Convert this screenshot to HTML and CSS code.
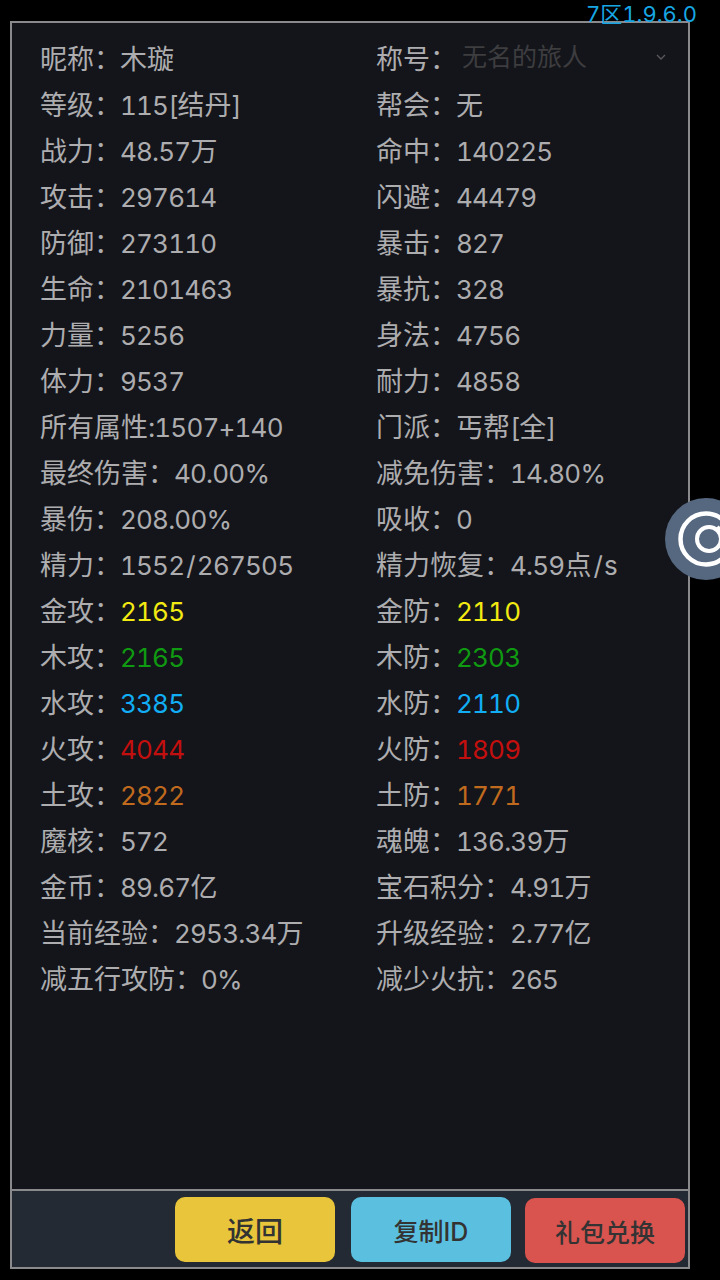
FILE: index.html
```html
<!DOCTYPE html>
<html lang="zh-CN">
<head>
<meta charset="utf-8">
<title>角色属性</title>
<link rel="stylesheet" href="styles.css">
</head>
<body>
<div class="version">7区1.9.6.0</div>
<main class="panel">
  <section class="stats">
    <div class="row">昵称：<span class="v"><span class="c">木璇</span></span></div>
    <div class="row title-row">称号：<span class="select"><span class="select-text">无名的旅人</span><svg class="chev" viewBox="0 0 10 6" width="10" height="6"><path d="M1 1l4 4 4-4" fill="none" stroke="#5a5a5c" stroke-width="1.3"/></svg></span></div>
    <div class="row">等级：<span class="v">115[<span class="c">结丹</span>]</span></div>
    <div class="row">帮会：<span class="v"><span class="c">无</span></span></div>
    <div class="row">战力：<span class="v">48.57<span class="c">万</span></span></div>
    <div class="row">命中：<span class="v">140225</span></div>
    <div class="row">攻击：<span class="v">297614</span></div>
    <div class="row">闪避：<span class="v">44479</span></div>
    <div class="row">防御：<span class="v">273110</span></div>
    <div class="row">暴击：<span class="v">827</span></div>
    <div class="row">生命：<span class="v">2101463</span></div>
    <div class="row">暴抗：<span class="v">328</span></div>
    <div class="row">力量：<span class="v">5256</span></div>
    <div class="row">身法：<span class="v">4756</span></div>
    <div class="row">体力：<span class="v">9537</span></div>
    <div class="row">耐力：<span class="v">4858</span></div>
    <div class="row">所有属性:<span class="v">1507+140</span></div>
    <div class="row">门派：<span class="v"><span class="c">丐帮</span>[<span class="c">全</span>]</span></div>
    <div class="row">最终伤害：<span class="v">40.00%</span></div>
    <div class="row">减免伤害：<span class="v">14.80%</span></div>
    <div class="row">暴伤：<span class="v">208.00%</span></div>
    <div class="row">吸收：<span class="v">0</span></div>
    <div class="row">精力：<span class="v">1552<span class="slash">/</span>267505</span></div>
    <div class="row">精力恢复：<span class="v">4.59<span class="c">点</span><span class="slash">/</span>s</span></div>
    <div class="row">金攻：<span class="v gold">2165</span></div>
    <div class="row">金防：<span class="v gold">2110</span></div>
    <div class="row">木攻：<span class="v wood">2165</span></div>
    <div class="row">木防：<span class="v wood">2303</span></div>
    <div class="row">水攻：<span class="v water">3385</span></div>
    <div class="row">水防：<span class="v water">2110</span></div>
    <div class="row">火攻：<span class="v fire">4044</span></div>
    <div class="row">火防：<span class="v fire">1809</span></div>
    <div class="row">土攻：<span class="v earth">2822</span></div>
    <div class="row">土防：<span class="v earth">1771</span></div>
    <div class="row">魔核：<span class="v">572</span></div>
    <div class="row">魂魄：<span class="v">136.39<span class="c">万</span></span></div>
    <div class="row">金币：<span class="v">89.67<span class="c">亿</span></span></div>
    <div class="row">宝石积分：<span class="v">4.91<span class="c">万</span></span></div>
    <div class="row">当前经验：<span class="v">2953.34<span class="c">万</span></span></div>
    <div class="row">升级经验：<span class="v">2.77<span class="c">亿</span></span></div>
    <div class="row">减五行攻防：<span class="v">0%</span></div>
    <div class="row">减少火抗：<span class="v">265</span></div>
  </section>
  <footer class="footer">
    <button class="btn btn-back">返回</button>
    <button class="btn btn-copy">复制ID</button>
    <button class="btn btn-gift">礼包兑换</button>
  </footer>
</main>
<div class="float-btn">
  <svg viewBox="0 0 55 82" width="55" height="82">
    <circle cx="41" cy="41" r="41" fill="#556880"/>
    <circle cx="41" cy="41" r="25.5" fill="none" stroke="#fff" stroke-width="4.5"/>
    <circle cx="44" cy="41" r="12" fill="none" stroke="#fff" stroke-width="4"/>
    <path d="M52 32l3-3" fill="none" stroke="#fff" stroke-width="4"/>
  </svg>
</div>
</body>
</html>
```
FILE: styles.css
```css
* { box-sizing: border-box; }
html, body { margin: 0; padding: 0; }
body {
  width: 720px;
  height: 1280px;
  background: #000;
  overflow: hidden;
  position: relative;
  font-family: Inter, "Noto Sans CJK SC", sans-serif;
  font-variant-numeric: tabular-nums;
  padding: 21px 30px 11px 10px;
}
.version {
  position: absolute;
  top: 0;
  right: 23px;
  font-size: 22px;
  line-height: 29px;
  color: #17a6e3;
  z-index: 2;
}
.panel {
  height: 1248px;
  border: 2px solid #8a8a8c;
  background: #14151a;
  display: flex;
  flex-direction: column;
}
.stats {
  flex: 1;
  display: grid;
  grid-template-columns: 336px 1fr;
  grid-auto-rows: 46px;
  align-content: start;
  padding: 14px 0 0 28px;
}
.row {
  display: flex;
  align-items: center;
  font-size: 27px;
  line-height: 46px;
  color: #adadb0;
  white-space: nowrap;
}
.v {
  font-size: 26px;
  letter-spacing: -0.8px;
  margin-left: -1px;
}
.c {
  font-size: 27px;
  letter-spacing: 0;
}
.slash { margin: 0 2px; }
.select {
  display: flex;
  align-items: center;
  justify-content: space-between;
  width: 207px;
  margin-left: 5px;
  margin-top: -6px;
}
.select-text { font-size: 25px; color: #3d3d40; }
.chev { margin-right: 3px; }
.gold { color: #f2ea12; }
.wood { color: #0f9a12; }
.water { color: #11aef5; }
.fire { color: #c40f0f; }
.earth { color: #c06a1e; }
.footer {
  height: 78px;
  border-top: 2px solid #8a8a8c;
  background: #242a33;
  display: flex;
  justify-content: flex-end;
  align-items: flex-start;
  gap: 16px;
  padding: 6px 3px 0 0;
}
.btn {
  width: 160px;
  height: 65px;
  border: 0;
  border-radius: 10px;
  font-family: inherit;
  font-size: 26px;
  color: #333;
  padding: 0;
}
.btn-back { background: #e8c53a; font-size: 28px; font-weight: 500; }
.btn-copy { background: #5bc0e0; font-size: 25px; font-weight: 500; }
.btn-gift { background: #d9534f; margin: 1px 0 0 -2px; font-size: 25px; font-weight: 500; }
.float-btn {
  position: absolute;
  left: 665px;
  top: 498px;
  line-height: 0;
  z-index: 3;
}
```
